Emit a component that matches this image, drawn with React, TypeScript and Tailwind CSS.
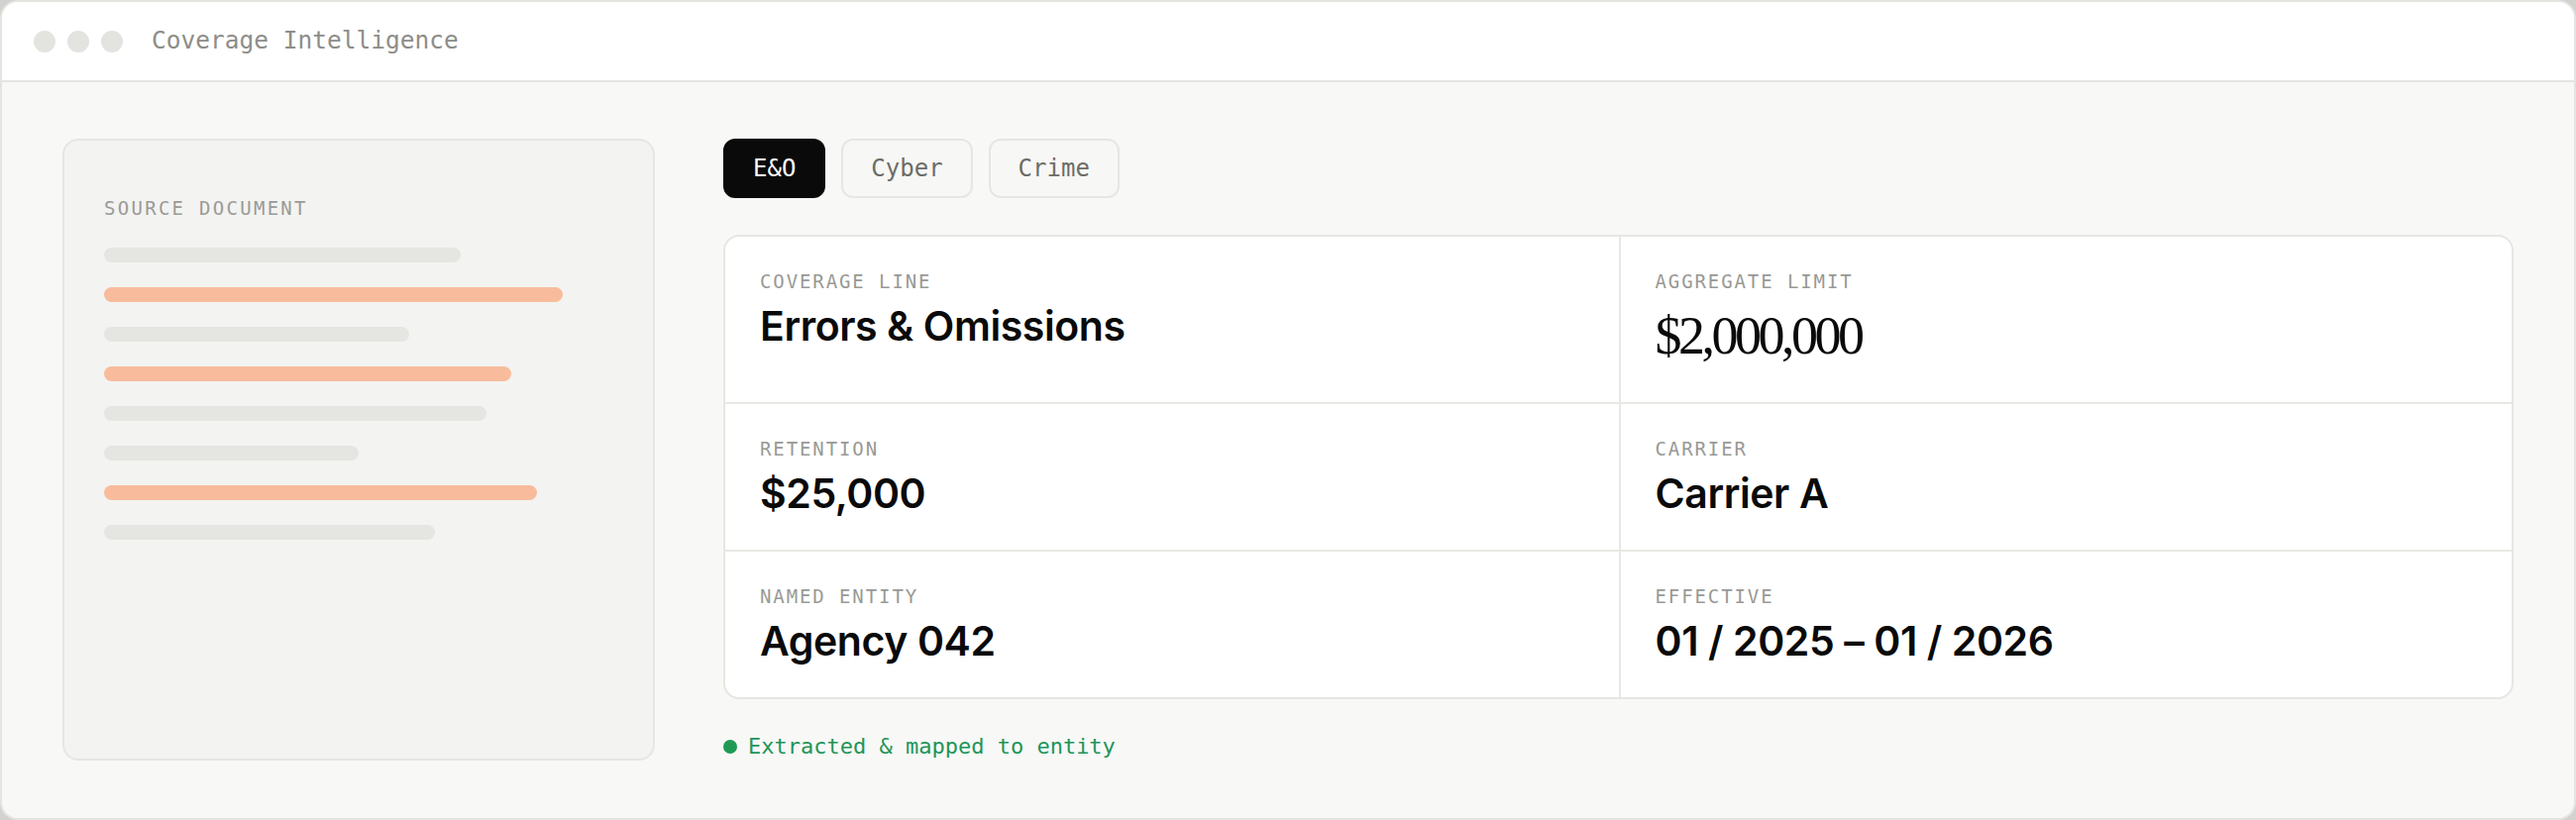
// Coverage Intelligence — extraction preview window.
// Left: stylised source document with highlighted lines.
// Right: coverage-line tabs + extracted field grid.

const mono = "font-['DejaVu_Sans_Mono','Liberation_Mono',monospace]";
const sans = "font-['Inter','Noto_Sans',sans-serif]";

const docLines = [
  { w: "w-[70%]", hit: false },
  { w: "w-[90%]", hit: true },
  { w: "w-[60%]", hit: false },
  { w: "w-[80%]", hit: true },
  { w: "w-[75%]", hit: false },
  { w: "w-[50%]", hit: false },
  { w: "w-[85%]", hit: true },
  { w: "w-[65%]", hit: false },
];

const tabs = ["E&O", "Cyber", "Crime"];

type Field = { label: string; value: string; serif?: boolean };

const fields: Field[] = [
  { label: "Coverage line", value: "Errors & Omissions" },
  { label: "Aggregate limit", value: "$2,000,000", serif: true },
  { label: "Retention", value: "$25,000" },
  { label: "Carrier", value: "Carrier A" },
  { label: "Named entity", value: "Agency 042" },
  { label: "Effective", value: "01 / 2025 – 01 / 2026" },
];

function SourceDocument() {
  return (
    <div className="h-[628px] w-[598px] shrink-0 rounded-[16px] border-2 border-[#e6e6e2] bg-[#f3f3f1] px-[40px] pt-[54px]">
      <p className={`${mono} text-[19px] leading-[28px] uppercase tracking-[0.12em] text-[#9a9a96]`}>
        Source document
      </p>
      <div className="mt-[26px] flex flex-col gap-[25px]">
        {docLines.map((l, i) => (
          <div
            key={i}
            className={`h-[15px] rounded-full ${l.w} ${l.hit ? "bg-[#f8bc9c]" : "bg-[#e5e5e1]"}`}
          />
        ))}
      </div>
    </div>
  );
}

function FieldCell({ field, index }: { field: Field; index: number }) {
  const right = index % 2 === 1;
  const lastRow = index >= fields.length - 2;
  return (
    <div
      className={`px-[35px] pt-[31px] pb-[33px] ${right ? "border-l-2 border-[#e8e8e4]" : ""} ${
        lastRow ? "" : "border-b-2 border-[#e8e8e4]"
      }`}
    >
      <p className={`${mono} text-[19px] leading-[28px] uppercase tracking-[0.1em] text-[#999995]`}>
        {field.label}
      </p>
      {field.serif ? (
        <p className="mt-[7px] font-['Liberation_Serif','Times_New_Roman',serif] text-[54px] leading-[68px] tracking-[-0.065em] text-[#0a0a0a]">
          {field.value}
        </p>
      ) : (
        <p className={`${sans} mt-[7px] text-[41px] leading-[48px] font-semibold tracking-[-0.01em] text-[#0a0a0a]`}>
          {field.value}
        </p>
      )}
    </div>
  );
}

export default function App() {
  return (
    <div className="h-[828px] w-[2600px] bg-[#d2d2ce]">
      <div className="flex h-full flex-col overflow-hidden rounded-[18px] border-2 border-[#e4e4e0] bg-[#f8f8f6]">
        {/* title bar */}
        <div className="flex h-[81px] shrink-0 items-center border-b-2 border-[#e5e5e1] bg-white pl-[32px]">
          <div className="flex gap-[12px]">
            <span className="h-[22px] w-[22px] rounded-full bg-[#e3e3df]" />
            <span className="h-[22px] w-[22px] rounded-full bg-[#e3e3df]" />
            <span className="h-[22px] w-[22px] rounded-full bg-[#e3e3df]" />
          </div>
          <span className={`${mono} ml-[29px] text-[24.5px] text-[#8d8d89]`}>Coverage Intelligence</span>
        </div>

        {/* body */}
        <div className="flex flex-1 gap-[69px] px-[61px] pt-[57px]">
          <SourceDocument />

          <div className="flex min-w-0 flex-1 flex-col">
            <div className="flex gap-4">
              {tabs.map((t, i) => (
                <button
                  key={t}
                  className={`${mono} h-[60px] rounded-[12px] border-2 px-[28px] text-[24px] ${
                    i === 0
                      ? "border-[#0a0a0a] bg-[#0a0a0a] font-medium text-white"
                      : "border-[#e6e6e2] bg-[#f7f7f5] text-[#6c6c68]"
                  }`}
                >
                  {t}
                </button>
              ))}
            </div>

            <div className="mt-[37px] grid grid-cols-2 overflow-hidden rounded-[16px] border-2 border-[#e6e6e2] bg-white">
              {fields.map((f, i) => (
                <FieldCell key={f.label} field={f} index={i} />
              ))}
            </div>

            <div className="mt-[33px] flex items-center gap-[11px]">
              <span className="h-[14px] w-[14px] rounded-full bg-[#1f9a55]" />
              <span className={`${mono} text-[22px] leading-[30px] text-[#20955a]`}>
                Extracted &amp; mapped to entity
              </span>
            </div>
          </div>
        </div>
      </div>
    </div>
  );
}
